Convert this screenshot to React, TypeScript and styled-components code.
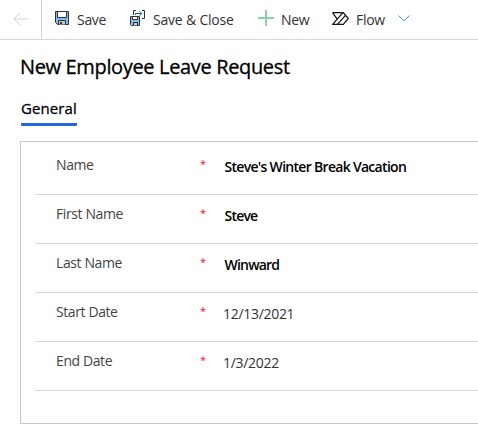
import React from "react";
import styled, { createGlobalStyle } from "styled-components";

const GlobalStyle = createGlobalStyle`
  * { box-sizing: border-box; }
  html, body, #root { height: 100%; }
  body {
    margin: 0;
    overflow: hidden;
    background: #fff;
    color: #000;
    font-family: "Segoe UI", "Open Sans", "Noto Sans", sans-serif;
    font-size: 14px;
  }
`;

const Page = styled.main`
  height: 444px;
  overflow: hidden;
`;

const CommandBar = styled.header`
  display: flex;
  height: 40px;
  border-bottom: 1px solid #d8d8d8;
`;

const BackButton = styled.button`
  flex: none;
  width: 42px;
  padding: 0 0 1px 13px;
  border: 0;
  border-right: 1px solid #d2d2d2;
  background: none;
  text-align: left;
  line-height: 0;
`;

const Command = styled.button<{ $gap: number; $left: number }>`
  display: flex;
  flex: none;
  align-items: center;
  margin: 0 0 0 ${(p) => p.$left}px;
  padding: 0 0 3px;
  gap: ${(p) => p.$gap}px;
  border: 0;
  background: none;
  color: #333;
  font: inherit;
  svg { flex: none; display: block; }
`;

const CommandLabel = styled.span<{ $width: number; $tracking: number }>`
  width: ${(p) => p.$width}px;
  padding-top: 3px;
  white-space: nowrap;
  text-align: left;
  line-height: 20px;
  letter-spacing: ${(p) => p.$tracking}px;
`;

const Title = styled.h1`
  margin: 13px 0 0 20px;
  font-size: 20px;
  line-height: 28px;
  font-weight: 400;
  letter-spacing: -0.35px;
  -webkit-text-stroke: 0.3px #000;
  white-space: nowrap;
`;

const TabList = styled.div`
  display: flex;
  margin: 18px 0 0 21px;
`;

const Tab = styled.div`
  width: 56px;
  height: 27px;
  border-bottom: 3px solid #2266e3;
  border-radius: 1px;
  font-size: 15px;
  line-height: 18px;
  letter-spacing: 0.1px;
  -webkit-text-stroke: 0.3px #000;
  white-space: nowrap;
`;

const Panel = styled.section`
  height: 283px;
  margin: 15px 0 0 20px;
  padding: 4px 0 0 14px;
  border: 1px solid #c8c8c8;
  border-right: 0;
`;

const FieldRow = styled.div`
  display: grid;
  grid-template-columns: 144px 23px 1fr;
  height: 49px;
  padding-left: 21px;
  border-bottom: 1px solid #d6d6d6;
`;

const FieldLabel = styled.label<{ $tracking: number }>`
  padding-top: 9px;
  color: #444;
  line-height: 20px;
  letter-spacing: ${(p) => p.$tracking}px;
  white-space: nowrap;
`;

const Required = styled.span`
  padding-top: 8px;
  color: #f01020;
  font-size: 11px;
  line-height: 20px;
`;

const FieldValue = styled.span<{ $strong: boolean; $tracking: number }>`
  padding: 11px 0 0 ${(p) => (p.$strong ? 1.5 : 0)}px;
  color: ${(p) => (p.$strong ? "#000" : "#333")};
  font-weight: ${(p) => (p.$strong ? 600 : 400)};
  line-height: 20px;
  letter-spacing: ${(p) => p.$tracking}px;
  white-space: nowrap;
`;

const BackIcon = () => (
  <svg width="16" height="14" viewBox="0 0 16 14" fill="none" stroke="#d2d0ce">
    <path d="M15 7H1M7 1 1 7l6 6" />
  </svg>
);

const SaveIcon = () => (
  <svg width="14" height="14" viewBox="0 0 14 14">
    <path d="M.5.5h13v13h-11l-2-2z" fill="#83beec" stroke="#333" />
    <path d="M2.5.5h9v6h-9z" fill="#fff" stroke="#333" />
    <path d="M3.5 13.5v-4h7v4" fill="#c8c6c4" stroke="#333" />
    <path d="M5 11h2v2H5z" fill="#333" />
  </svg>
);

const SaveCloseIcon = () => (
  <svg width="16" height="16" viewBox="0 0 16 16" fill="none">
    <path d="M3.5 5V.5H6M12 .5h2.5v8H12" stroke="#333" />
    <path d="M5.5 5V3.5h6M9.5 1.2l2.3 2.3-2.3 2.3" stroke="#1160b7" />
    <path d="M.5 6.5h9v9h-8l-1-1z" fill="#83beec" stroke="#333" />
    <path d="M2.5 6.5h5v3h-5z" fill="#fff" stroke="#333" />
    <path d="M3.5 15.5v-3h4v3" fill="#c8c6c4" stroke="#333" />
  </svg>
);

const PlusIcon = () => (
  <svg width="16" height="16" viewBox="0 0 16 16">
    <path d="M7 0h2v16H7zM0 7h16v2H0z" fill="#8bd2a5" />
  </svg>
);

const FlowIcon = () => (
  <svg width="17" height="13" viewBox="0 0 17 13" fill="none" stroke="#111" strokeWidth="1.2" strokeLinejoin="round">
    <path d="M.6.6h10.7l4.9 5.9-4.9 5.9H.6L10.9.6" />
    <path d="M.6.6 5 6.8M5.5 12.4 13.5 3.3" />
  </svg>
);

const ChevronIcon = () => (
  <svg width="12" height="7" viewBox="0 0 12 7" fill="none" stroke="#4b92b9">
    <path d="m.4.5 5.6 5.4L11.6.5" />
  </svg>
);

const fields = [
  { label: "Name", value: "Steve's Winter Break Vacation", strong: true, tracking: -0.4, valueTracking: -0.7 },
  { label: "First Name", value: "Steve", strong: true, tracking: -0.4, valueTracking: -0.8 },
  { label: "Last Name", value: "Winward", strong: true, tracking: -0.4, valueTracking: -0.8 },
  { label: "Start Date", value: "12/13/2021", strong: false, tracking: -0.4, valueTracking: -0.3 },
  { label: "End Date", value: "1/3/2022", strong: false, tracking: -0.4, valueTracking: -0.3 },
];

export default function App() {
  return (
    <Page>
      <GlobalStyle />
      <CommandBar>
        <BackButton aria-label="Back"><BackIcon /></BackButton>
        <Command $left={13} $gap={8}>
          <SaveIcon />
          <CommandLabel $width={30} $tracking={-0.3}>Save</CommandLabel>
        </Command>
        <Command $left={23} $gap={7}>
          <SaveCloseIcon />
          <CommandLabel $width={81} $tracking={-0.2}>Save &amp; Close</CommandLabel>
        </Command>
        <Command $left={24} $gap={7}>
          <PlusIcon />
          <CommandLabel $width={28} $tracking={-0.3}>New</CommandLabel>
        </Command>
        <Command $left={23} $gap={7}>
          <FlowIcon />
          <CommandLabel $width={35} $tracking={-0.3}>Flow</CommandLabel>
          <ChevronIcon />
        </Command>
      </CommandBar>
      <Title>New Employee Leave Request</Title>
      <TabList role="tablist">
        <Tab role="tab">General</Tab>
      </TabList>
      <Panel>
        {fields.map((f) => (
          <FieldRow key={f.label}>
            <FieldLabel $tracking={f.tracking}>{f.label}</FieldLabel>
            <Required>*</Required>
            <FieldValue $strong={f.strong} $tracking={f.valueTracking}>{f.value}</FieldValue>
          </FieldRow>
        ))}
      </Panel>
    </Page>
  );
}
